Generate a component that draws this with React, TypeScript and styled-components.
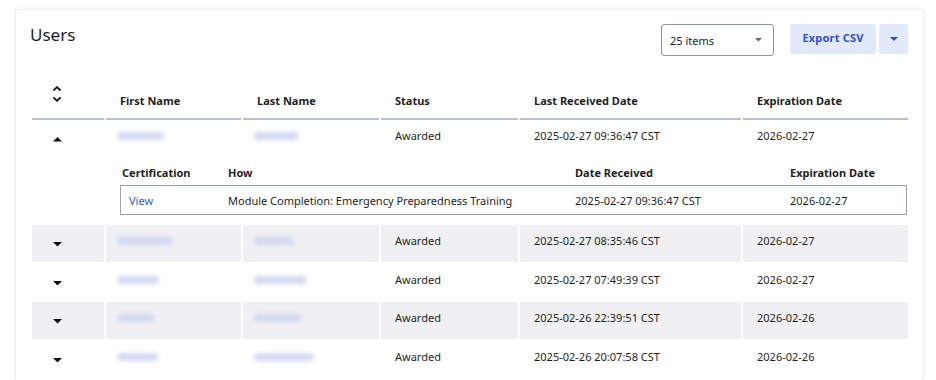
import styled, { createGlobalStyle } from 'styled-components';

const GlobalStyle = createGlobalStyle`
  html, body {
    margin: 0;
    padding: 0;
    background: #ffffff;
  }

  body {
    font-family: 'Noto Sans', 'Open Sans', Arial, sans-serif;
    color: #1f1f1f;
  }
`;

interface UserRow {
  first: number;
  last: number;
  status: string;
  received: string;
  expires: string;
}

const ROWS: UserRow[] = [
  { first: 47, last: 44, status: 'Awarded', received: '2025-02-27 09:36:47 CST', expires: '2026-02-27' },
  { first: 56, last: 40, status: 'Awarded', received: '2025-02-27 08:35:46 CST', expires: '2026-02-27' },
  { first: 42, last: 52, status: 'Awarded', received: '2025-02-27 07:49:39 CST', expires: '2026-02-27' },
  { first: 38, last: 47, status: 'Awarded', received: '2025-02-26 22:39:51 CST', expires: '2026-02-26' },
  { first: 41, last: 60, status: 'Awarded', received: '2025-02-26 20:07:58 CST', expires: '2026-02-26' },
];

function SortIcon() {
  return (
    <svg width='10' height='16' viewBox='0 0 10 16'>
      <path d='M1.5 4.5 L5 1.2 L8.5 4.5' fill='none' stroke='#111' strokeWidth='1.8' />
      <path d='M1.5 11.5 L5 14.8 L8.5 11.5' fill='none' stroke='#111' strokeWidth='1.8' />
    </svg>
  );
}

function Caret({ up, color, size }: { up?: boolean; color: string; size: number }) {
  const h = size / 2;
  return (
    <svg width={size} height={h} viewBox={`0 0 ${size} ${h}`}>
      <path
        d={up ? `M0 ${h} L${size / 2} 0 L${size} ${h} Z` : `M0 0 L${size / 2} ${h} L${size} 0 Z`}
        fill={color}
      />
    </svg>
  );
}

function App() {
  return (
    <>
      <GlobalStyle />
      <Card>
        <Toolbar>
          <Title>Users</Title>
          <Controls>
            <Select>
              <span>25 items</span>
              <Caret color='#666' size={7} />
            </Select>
            <ExportButton>Export CSV</ExportButton>
            <MenuButton>
              <Caret color='#2f52c8' size={8} />
            </MenuButton>
          </Controls>
        </Toolbar>

        <HeadGrid>
          <HeadCell $icon>
            <SortIcon />
          </HeadCell>
          <HeadCell>First Name</HeadCell>
          <HeadCell>Last Name</HeadCell>
          <HeadCell>Status</HeadCell>
          <HeadCell>Last Received Date</HeadCell>
          <HeadCell>Expiration Date</HeadCell>
        </HeadGrid>

        <Body>
          {ROWS.map((row, index) => (
            <div key={row.received}>
              <RowGrid $striped={index % 2 === 1}>
                <ToggleCell>
                  <Caret up={index === 0} color='#111' size={9} />
                </ToggleCell>
                <Cell>
                  <Blur style={{ width: row.first }} />
                </Cell>
                <Cell>
                  <Blur style={{ width: row.last }} />
                </Cell>
                <Cell>{row.status}</Cell>
                <Cell>{row.received}</Cell>
                <Cell>{row.expires}</Cell>
              </RowGrid>
              {index === 0 && (
                <Detail>
                  <DetailHead>
                    <DetailHeadCell $first>Certification</DetailHeadCell>
                    <DetailHeadCell>How</DetailHeadCell>
                    <DetailHeadCell>Date Received</DetailHeadCell>
                    <DetailHeadCell>Expiration Date</DetailHeadCell>
                  </DetailHead>
                  <DetailRow>
                    <DetailCell>
                      <Link>View</Link>
                    </DetailCell>
                    <DetailCell>Module Completion: Emergency Preparedness Training</DetailCell>
                    <DetailCell>{row.received}</DetailCell>
                    <DetailCell>{row.expires}</DetailCell>
                  </DetailRow>
                </Detail>
              )}
            </div>
          ))}
        </Body>
      </Card>
    </>
  );
}

const COLUMNS = '72px 135px 136px 137px 221px 1fr';
const DETAIL_COLUMNS = '99px 347px 215px 1fr';

const Card = styled.div`
  box-sizing: border-box;
  width: 909px;
  height: 371px;
  margin: 9px 0 0 15px;
  padding: 0 15px 0 16px;
  border: 1px solid #f0f0f2;
  border-bottom: none;
  box-shadow: 0 0 4px rgba(0, 0, 0, 0.06);
  overflow: hidden;
`;

const Toolbar = styled.div`
  display: flex;
  justify-content: space-between;
  align-items: flex-start;
  padding-top: 14px;
`;

const Title = styled.h2`
  margin: -1px 0 0 -2px;
  font-size: 17px;
  line-height: 23px;
  font-weight: 400;
  color: #1f1f1f;
`;

const Controls = styled.div`
  display: flex;
  align-items: flex-start;
`;

const Select = styled.div`
  box-sizing: border-box;
  display: flex;
  justify-content: space-between;
  align-items: center;
  width: 113px;
  height: 32px;
  margin-right: 16px;
  padding: 0 11px 0 8px;
  border: 1px solid #8c97aa;
  border-radius: 3px;
  font-size: 11px;
  color: #1f1f1f;
`;

const ExportButton = styled.button`
  box-sizing: border-box;
  width: 86px;
  height: 30px;
  margin-right: 3px;
  padding: 0 0 4px;
  border: none;
  border-radius: 2px;
  background: #e1e9fb;
  color: #2f52c8;
  font-family: inherit;
  font-size: 11px;
  font-weight: 700;
  letter-spacing: 0.2px;
`;

const MenuButton = styled.button`
  box-sizing: border-box;
  display: flex;
  justify-content: center;
  align-items: center;
  width: 29px;
  height: 30px;
  padding: 0;
  border: none;
  border-radius: 2px;
  background: #e1e9fb;
`;

const HeadGrid = styled.div`
  display: grid;
  grid-template-columns: ${COLUMNS};
  column-gap: 2px;
  height: 40px;
  margin-top: 24px;
`;

const HeadCell = styled.div<{ $icon?: boolean }>`
  display: flex;
  align-items: flex-end;
  padding: 0 0 ${({ $icon }) => ($icon ? '16px' : '10px')} ${({ $icon }) => ($icon ? '20px' : '14px')};
  border-bottom: 2px solid #b9c1cf;
  font-size: 11px;
  line-height: 15px;
  font-weight: 700;
  color: #1f1f1f;
`;

const Body = styled.div`
  display: flex;
  flex-direction: column;
  gap: 2px;
`;

const RowGrid = styled.div<{ $striped: boolean }>`
  display: grid;
  grid-template-columns: ${COLUMNS};
  column-gap: 2px;
  height: 36.5px;

  & > div {
    background: ${({ $striped }) => ($striped ? '#f0f0f2' : '#ffffff')};
  }
`;

const Cell = styled.div`
  display: flex;
  align-items: flex-start;
  padding: 8px 0 0 14px;
  font-size: 11px;
  line-height: 15px;
  color: #1f1f1f;
`;

const ToggleCell = styled.div`
  display: flex;
  align-items: flex-start;
  padding: 17px 0 0 21px;
`;

const Blur = styled.span`
  display: block;
  height: 8px;
  margin: 4px 0 0 -3px;
  border-radius: 4px;
  background: #d2d9f1;
  filter: blur(2px);
`;

const Detail = styled.div`
  margin: 0 1px 8px 88px;
`;

const DetailHead = styled.div`
  display: grid;
  grid-template-columns: ${DETAIL_COLUMNS};
  padding: 8px 1px 0;
  height: 20.5px;
`;

const DetailHeadCell = styled.div<{ $first?: boolean }>`
  padding-left: ${({ $first }) => ($first ? '1px' : '8px')};
  font-size: 11px;
  line-height: 15px;
  font-weight: 700;
  color: #1f1f1f;
`;

const DetailRow = styled.div`
  display: grid;
  grid-template-columns: ${DETAIL_COLUMNS};
  height: 30px;
  box-sizing: border-box;
  border: 1px solid #9aa3b3;
  align-items: center;
`;

const DetailCell = styled.div`
  padding-left: 8px;
  font-size: 11px;
  line-height: 15px;
  color: #1f1f1f;
`;

const Link = styled.a`
  color: #3a5cc9;
  cursor: pointer;
`;

export default App;
